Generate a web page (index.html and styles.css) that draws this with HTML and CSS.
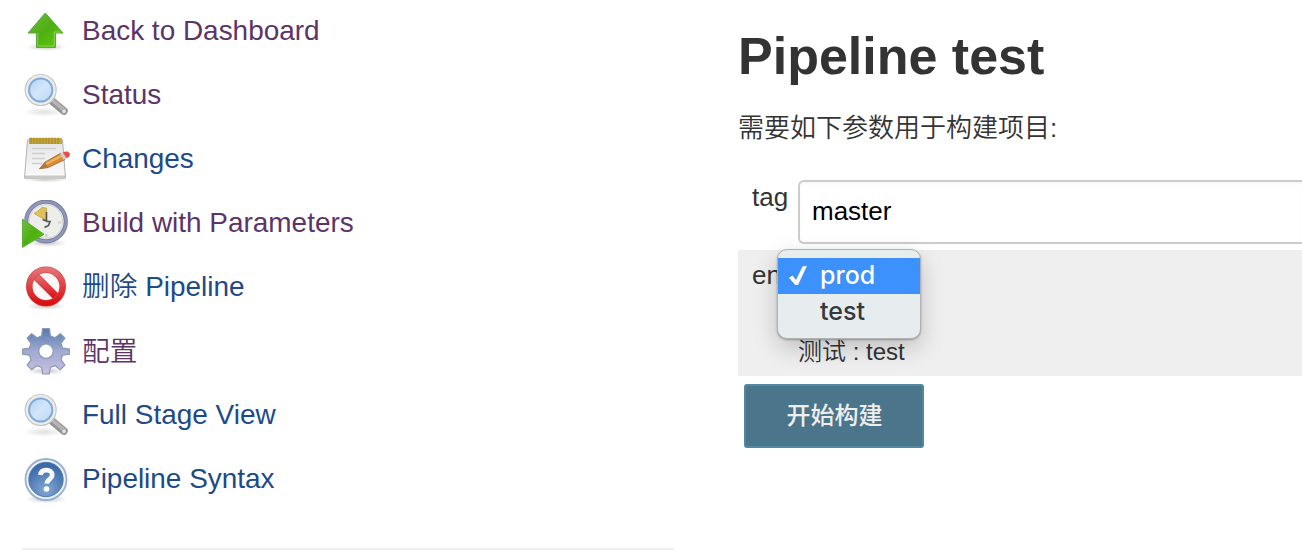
FILE: index.html
```html
<!DOCTYPE html>
<html lang="zh-CN">
<head>
<meta charset="utf-8">
<title>Pipeline test</title>
<link rel="stylesheet" href="styles.css">
</head>
<body>
<svg class="defs" width="0" height="0" aria-hidden="true">
  <defs>
    <linearGradient id="green" x1="0" y1="0" x2="1" y2="1"><stop offset="0" stop-color="#6fbf45"/><stop offset=".5" stop-color="#4fae10"/><stop offset="1" stop-color="#62cc12"/></linearGradient>
    <linearGradient id="lens" x1="0" y1="0" x2="1" y2="1"><stop offset="0" stop-color="#a9cdf3"/><stop offset=".5" stop-color="#d3e6fa"/><stop offset="1" stop-color="#b4d3f5"/></linearGradient>
    <linearGradient id="paper" x1="0" y1="0" x2="0" y2="1"><stop offset="0" stop-color="#e4e4e4"/><stop offset="1" stop-color="#fafafa"/></linearGradient>
    <linearGradient id="red" x1="0" y1="0" x2="0" y2="1"><stop offset="0" stop-color="#e67072"/><stop offset=".45" stop-color="#df4547"/><stop offset="1" stop-color="#db0f12"/></linearGradient>
    <linearGradient id="gear" x1="0" y1="0" x2="0" y2="1"><stop offset="0" stop-color="#5479ac"/><stop offset=".5" stop-color="#a0abd0"/><stop offset="1" stop-color="#c9c0e2"/></linearGradient>
    <radialGradient id="help" cx=".5" cy=".8" r=".7"><stop offset="0" stop-color="#82a8d6"/><stop offset="1" stop-color="#3e6aa7"/></radialGradient>
    <radialGradient id="shade"><stop offset="0" stop-color="#000" stop-opacity=".22"/><stop offset="1" stop-color="#000" stop-opacity="0"/></radialGradient>
    <radialGradient id="faint"><stop offset="0" stop-color="#000" stop-opacity=".12"/><stop offset="1" stop-color="#000" stop-opacity="0"/></radialGradient>
    <symbol id="search" viewBox="0 0 48 48">
      <ellipse cx="22" cy="40" rx="21" ry="5" fill="url(#faint)"/>
      <path d="M30 29l12 10" stroke="#949494" stroke-width="7.500" stroke-linecap="round"/>
      <path d="M30 28l12 10" stroke="#b4b4b4" stroke-width="4" stroke-linecap="round"/>
      <circle cx="42" cy="39.500" r="1.800" fill="#e4e4e4"/>
      <circle cx="18.700" cy="18" r="14.300" fill="url(#lens)" stroke="#c6c6c4" stroke-width="3.600"/>
      <circle cx="18.700" cy="18" r="13.700" fill="none" stroke="#ededeb" stroke-width="2.400"/>
      <circle cx="18.700" cy="18" r="11.600" fill="none" stroke="#86abd9" stroke-width="2"/>
    </symbol>
  </defs>
</svg>
<div class="page">
  <nav class="side">
    <a class="task visited" href="#">
      <svg class="icon" viewBox="0 0 48 48"><ellipse cx="24" cy="39" rx="20" ry="4" fill="url(#shade)"/><path d="M23.300 5L41 25h-7.500v14.500h-19V25H6z" fill="url(#green)" stroke="#5aa83c"/><path d="M15.800 25v13h16.500V24h6" fill="none" stroke="#86d451"/></svg>
      <span>Back to Dashboard</span></a>
    <a class="task visited" href="#"><svg class="icon"><use href="#search"/></svg><span>Status</span></a>
    <a class="task" href="#">
      <svg class="icon" viewBox="0 0 48 48"><ellipse cx="24" cy="43" rx="23" ry="3.500" fill="url(#shade)"/><path d="M5.500 4h35L43.500 42H2.500z" fill="url(#paper)" stroke="#b2b2b2"/><path d="M3 39.500h40V43H3z" fill="#c9c9c6"/><path d="M7 2h33v6H7z" fill="#c5a638"/><path d="M9 1.500V8m3-6.500V8m3-6.500V8m3-6.500V8m3-6.500V8m3-6.500V8m3-6.500V8m3-6.500V8m3-6.500V8m3-6.500V8" stroke="#a0842a"/><path d="M10 12.500h24M10 17.500h13M10 22.500h13M10 27.500h10" stroke="#cdcdcf" stroke-width="1.500"/><path d="M17.500 32.800l5.500-6.600L39 17l4 6.500-17 8z" fill="#de8b34" stroke="#a8743c"/><path d="M24 28l17-9" stroke="#f0b364" stroke-width="2"/><path d="M17.500 32.800l5.500-6.300 3 4.800z" fill="#a87a4b"/><path d="M38 17.500l3-1.500 3.500 6-3 1.700z" fill="#ccc"/><path d="M41 16.500c3-1.500 5.500-1 6.500.8s.3 3.400-3 5z" fill="#e3504c"/></svg>
      <span>Changes</span></a>
    <a class="task visited" href="#">
      <svg class="icon" viewBox="0 0 48 48"><ellipse cx="25" cy="43" rx="20" ry="4" fill="url(#shade)"/><circle cx="24" cy="21.500" r="19.800" fill="#ededea" stroke="#7c80a6" stroke-width="4.200"/><circle cx="24" cy="21.500" r="19.800" fill="none" stroke="#9498b8" stroke-width="2"/><circle cx="24" cy="21.500" r="16.700" fill="none" stroke="#d4d4cf"/><path d="M36 22.500h3M24.500 34v3" stroke="#d0d0d0" stroke-width="2"/><path d="M12 13.500l4-2.500 4-3.500 4.500.5v12.500z" fill="#e1c05a" stroke="#c9ac58"/><path d="M24.500 12v9l-4-1.500M24.500 21.500h3.500l-1.500 4-4 2" stroke="#555" stroke-width="1.600" fill="none"/><path d="M.3 19L22 34.300.3 47.500z" fill="url(#green)" stroke="#57aa34"/></svg>
      <span>Build with Parameters</span></a>
    <a class="task" href="#">
      <svg class="icon" viewBox="0 0 48 48"><ellipse cx="24" cy="42" rx="20" ry="4" fill="url(#shade)"/><circle cx="24" cy="22.500" r="16.500" fill="#fdf8f8"/><path d="M12.500 11l23 23" stroke="#d03a3c" stroke-width="7.500"/><path d="M12.500 11l23 23" stroke="url(#red)" stroke-width="6.500"/><circle cx="24" cy="22.500" r="16.700" fill="none" stroke="#d04a4c" stroke-width="6.600"/><circle cx="24" cy="22.500" r="16.700" fill="none" stroke="url(#red)" stroke-width="5.400"/></svg>
      <span><span class="han">删除</span> Pipeline</span></a>
    <a class="task visited" href="#">
      <svg class="icon" viewBox="0 0 48 48"><ellipse cx="24" cy="43" rx="20" ry="4" fill="url(#shade)"/><path fill-rule="evenodd" fill="url(#gear)" stroke="#8b98b8" stroke-width="1.200" stroke-linejoin="round" d="M20.500 .6h7l.8 7.200 4.700 2 5.400-4.200 4.500 4.500-4 5.500 1.900 4.600 6.700.9v5l-6.700 1-1.900 4.500 4 5.500-4.500 4.600-5.500-4.100-4.600 1.900-1 6.500h-6.600l-1-6.500-4.600-1.900-5.500 4.100-4.500-4.600 4-5.500-1.900-4.500-6.700-1v-5l6.700-.9 1.900-4.600-4-5.500 4.500-4.500 5.400 4.200 4.700-2zM24 16a7.200 7.200 0 1 0 0 14.400 7.200 7.200 0 0 0 0-14.400z"/></svg>
      <span class="han">配置</span></a>
    <a class="task" href="#"><svg class="icon"><use href="#search"/></svg><span>Full Stage View</span></a>
    <a class="task" href="#">
      <svg class="icon" viewBox="0 0 48 48"><ellipse cx="24" cy="43" rx="21" ry="4.500" fill="url(#shade)"/><circle cx="24" cy="23.500" r="20.500" fill="#eef3f9" stroke="#98b1d3" stroke-width="1.800"/><circle cx="24" cy="23.500" r="17.200" fill="url(#help)" stroke="#5179ad"/><path d="M18.500 19c.3-3.200 2.500-4.800 5.700-4.800 3.500 0 6 1.800 6 4.700 0 4.200-5.200 4.200-5.500 8.800" fill="none" stroke="#f6f9fd" stroke-width="4.800"/><circle cx="24.500" cy="33" r="2.800" fill="#fff"/></svg>
      <span>Pipeline Syntax</span></a>
    <hr class="rule">
  </nav>
  <main class="main">
    <h1 class="title">Pipeline test</h1>
    <p class="intro">需要如下参数用于构建项目:</p>
    <form class="form">
      <div class="row tag-row">
        <label class="label" for="tag">tag</label>
        <input class="input" id="tag" type="text" value="master">
      </div>
      <div class="row env-row">
        <span class="label">en</span>
        <div class="description">测试 : test</div>
        <div class="menu" role="listbox">
          <div class="option selected" role="option"><svg class="check" viewBox="0 0 18 22"><path d="M0 12.800l3.500-2.300 3.500 4.500L13.500 1.500l4.500-.8L9 20H6.300z" fill="#fff"/></svg><span>prod</span></div>
          <div class="option" role="option"><span class="check"></span><span>test</span></div>
        </div>
      </div>
      <button class="submit" type="button">开始构建</button>
    </form>
  </main>
</div>
</body>
</html>
```
FILE: styles.css
```css
* { box-sizing: border-box; }
body {
  margin: 0;
  background: #fff;
  color: #333;
  font-family: "Liberation Sans", "Noto Sans CJK SC DemiLight", "Noto Sans CJK SC", sans-serif;
  font-size: 26px;
  overflow: hidden;
}
.defs { position: absolute; }
.page {
  display: grid;
  grid-template-columns: 652px 1fr;
  column-gap: 64px;
  height: 550px;
  padding-left: 22px;
}
.side { display: flex; flex-direction: column; }
.task {
  display: flex;
  align-items: center;
  gap: 12px;
  height: 64px;
  color: #204a87;
  font-size: 27.95px;
  line-height: 40px;
  text-decoration: none;
  white-space: nowrap;
}
.task.visited { color: #5c3566; }
.task > span { margin-top: -2px; }
.task > .han { margin-top: 0; }
.han { font-size: 27.700px; }
.icon { width: 48px; height: 48px; flex: none; overflow: hidden; }
.rule {
  width: 100%;
  height: 3px;
  margin: 36px 0 0;
  border: 0;
  border-radius: 3px;
  background: #f0f0f0;
}
.main { min-width: 0; }
.title {
  margin: 26px 0 0;
  font-size: 52px;
  line-height: 60px;
}
.intro { margin: 22px 0 0; line-height: 40px; }
.form { margin-top: 32px; }
.row { display: grid; grid-template-columns: 60px 1fr; align-content: start; }
.label { padding-left: 14px; line-height: 34px; }
.tag-row { height: 70px; }
.input {
  width: 100%;
  height: 64px;
  padding: 0 12px 2px;
  border: 2px solid #ccc;
  border-right: 0;
  border-radius: 6px 0 0 6px;
  background: #fff;
  box-shadow: inset 0 2px 2px rgba(0, 0, 0, .03);
  color: #000;
  font: inherit;
}
.env-row {
  position: relative;
  height: 126px;
  padding-top: 8px;
  background: #efefef;
}
.description {
  grid-column: 2;
  margin-top: 76px;
  font-size: 24px;
  line-height: 36px;
}
.menu {
  position: absolute;
  left: 39px;
  top: -1px;
  width: 144px;
  height: 90px;
  padding: 8px 0;
  border: 1px solid #b0b3b4;
  border-radius: 10px;
  background: #e7ecef;
  box-shadow: 0 9px 24px rgba(0, 0, 0, .2), 0 1px 2px rgba(0, 0, 0, .3);
}
.option {
  display: flex;
  align-items: center;
  gap: 13px;
  height: 36px;
  padding-left: 11px;
  color: #333a3d;
  font: 500 25px/34px Inter, sans-serif;
}
.option > span { margin-top: -2px; }
.option.selected { background: #3c91fc; color: #fff; }
.check { width: 18px; height: 22px; }
.submit {
  width: 180px;
  height: 64px;
  margin: 8px 0 0 6px;
  padding: 0 0 0 1px;
  border: 2px solid #5088a1;
  border-radius: 3px;
  background: #4b758b;
  color: #eee;
  font: 500 24px/36px "Liberation Sans", "Noto Sans CJK SC Medium", "Noto Sans CJK SC", sans-serif;
}
```
